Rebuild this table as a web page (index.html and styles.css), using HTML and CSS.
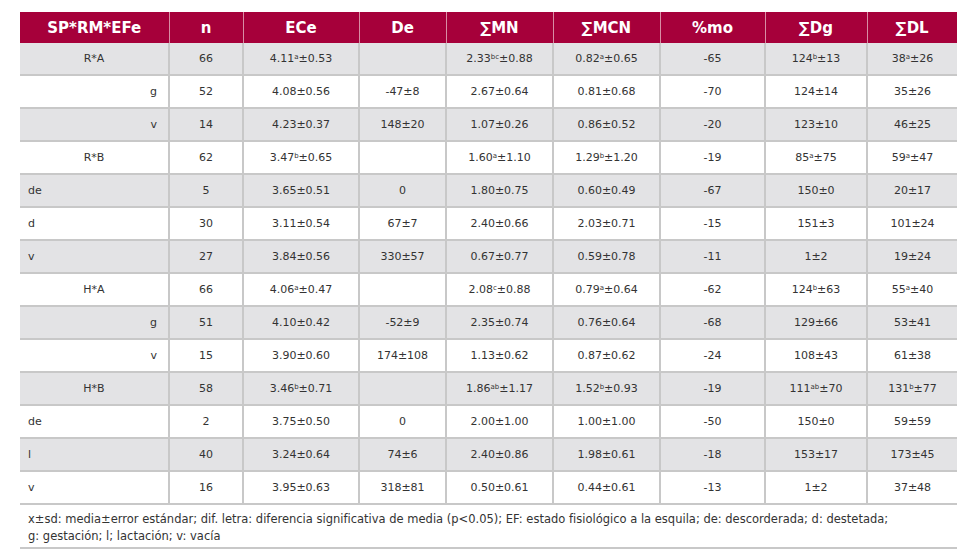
FILE: index.html
```html
<!DOCTYPE html>
<html lang="es">
<head>
<meta charset="utf-8">
<link rel="stylesheet" href="styles.css">
</head>
<body>
<div class="wrap">
<table class="data">
<colgroup>
<col class="w1"><col class="w2"><col class="w3"><col class="w4"><col class="w5"><col class="w6"><col class="w7"><col class="w8"><col class="w9">
</colgroup>
<thead>
<tr><th>SP*RM*EFe</th><th>n</th><th>ECe</th><th>De</th><th>∑MN</th><th>∑MCN</th><th>%mo</th><th>∑Dg</th><th>∑DL</th></tr>
</thead>
<tbody>
<tr class="gray"><td class="c">R*A</td><td>66</td><td>4.11<sup>a</sup>±0.53</td><td></td><td>2.33<sup>bc</sup>±0.88</td><td>0.82<sup>a</sup>±0.65</td><td>-65</td><td>124<sup>b</sup>±13</td><td>38<sup>a</sup>±26</td></tr>
<tr><td class="r">g</td><td>52</td><td>4.08±0.56</td><td>-47±8</td><td>2.67±0.64</td><td>0.81±0.68</td><td>-70</td><td>124±14</td><td>35±26</td></tr>
<tr class="gray"><td class="r">v</td><td>14</td><td>4.23±0.37</td><td>148±20</td><td>1.07±0.26</td><td>0.86±0.52</td><td>-20</td><td>123±10</td><td>46±25</td></tr>
<tr><td class="c">R*B</td><td>62</td><td>3.47<sup>b</sup>±0.65</td><td></td><td>1.60<sup>a</sup>±1.10</td><td>1.29<sup>b</sup>±1.20</td><td>-19</td><td>85<sup>a</sup>±75</td><td>59<sup>a</sup>±47</td></tr>
<tr class="gray"><td class="l">de</td><td>5</td><td>3.65±0.51</td><td>0</td><td>1.80±0.75</td><td>0.60±0.49</td><td>-67</td><td>150±0</td><td>20±17</td></tr>
<tr><td class="l">d</td><td>30</td><td>3.11±0.54</td><td>67±7</td><td>2.40±0.66</td><td>2.03±0.71</td><td>-15</td><td>151±3</td><td>101±24</td></tr>
<tr class="gray"><td class="l">v</td><td>27</td><td>3.84±0.56</td><td>330±57</td><td>0.67±0.77</td><td>0.59±0.78</td><td>-11</td><td>1±2</td><td>19±24</td></tr>
<tr><td class="c">H*A</td><td>66</td><td>4.06<sup>a</sup>±0.47</td><td></td><td>2.08<sup>c</sup>±0.88</td><td>0.79<sup>a</sup>±0.64</td><td>-62</td><td>124<sup>b</sup>±63</td><td>55<sup>a</sup>±40</td></tr>
<tr class="gray"><td class="r">g</td><td>51</td><td>4.10±0.42</td><td>-52±9</td><td>2.35±0.74</td><td>0.76±0.64</td><td>-68</td><td>129±66</td><td>53±41</td></tr>
<tr><td class="r">v</td><td>15</td><td>3.90±0.60</td><td>174±108</td><td>1.13±0.62</td><td>0.87±0.62</td><td>-24</td><td>108±43</td><td>61±38</td></tr>
<tr class="gray"><td class="c">H*B</td><td>58</td><td>3.46<sup>b</sup>±0.71</td><td></td><td>1.86<sup>ab</sup>±1.17</td><td>1.52<sup>b</sup>±0.93</td><td>-19</td><td>111<sup>ab</sup>±70</td><td>131<sup>b</sup>±77</td></tr>
<tr><td class="l">de</td><td>2</td><td>3.75±0.50</td><td>0</td><td>2.00±1.00</td><td>1.00±1.00</td><td>-50</td><td>150±0</td><td>59±59</td></tr>
<tr class="gray"><td class="l">l</td><td>40</td><td>3.24±0.64</td><td>74±6</td><td>2.40±0.86</td><td>1.98±0.61</td><td>-18</td><td>153±17</td><td>173±45</td></tr>
<tr><td class="l">v</td><td>16</td><td>3.95±0.63</td><td>318±81</td><td>0.50±0.61</td><td>0.44±0.61</td><td>-13</td><td>1±2</td><td>37±48</td></tr>
</tbody>
</table>
<p class="note">x±sd: media±error estándar; dif. letra: diferencia significativa de media (p&lt;0.05); EF: estado fisiológico a la esquila; de: descorderada; d: destetada;<br>g: gestación; l; lactación; v: vacía</p>
</div>
</body>
</html>
```
FILE: styles.css
```css
html, body {
  margin: 0;
  padding: 0;
  background: #ffffff;
}
body {
  font-family: "DejaVu Sans", "Liberation Sans", sans-serif;
  color: #333333;
}
.wrap {
  width: 937px;
  padding: 12px 0 0 20px;
}
.data {
  width: 937px;
  table-layout: fixed;
  border-collapse: collapse;
  border-spacing: 0;
}
.w1 { width: 149px; }
.w2 { width: 74px; }
.w3 { width: 116px; }
.w4 { width: 87px; }
.w5 { width: 107px; }
.w6 { width: 107px; }
.w7 { width: 105px; }
.w8 { width: 102px; }
.w9 { width: 90px; }
.data th {
  background: #a6003a;
  color: #ffffff;
  font-weight: bold;
  font-size: 15px;
  height: 31px;
  padding: 0;
  text-align: center;
  border-left: 1px solid #d88ea4;
}
.data th:first-child { border-left: none; }
.data td {
  font-size: 11px;
  height: 31px;
  padding: 0;
  text-align: center;
  border-bottom: 2px solid #c8c8c8;
  border-left: 2px solid #c8c8c8;
  white-space: nowrap;
}
.data td:first-child { border-left: none; }
.data tr.gray td { background: #e3e3e5; }
.data td.c { text-align: center; }
.data td.r { text-align: right; padding-right: 11px; }
.data td.l { text-align: left; padding-left: 8px; }
sup {
  font-size: 7px;
  vertical-align: 3px;
  line-height: 0;
}
.note {
  margin: 0;
  padding: 6px 0 2px 8px;
  font-size: 11.5px;
  line-height: 17px;
  color: #333333;
  border-bottom: 2px solid #c8c8c8;
}
```
